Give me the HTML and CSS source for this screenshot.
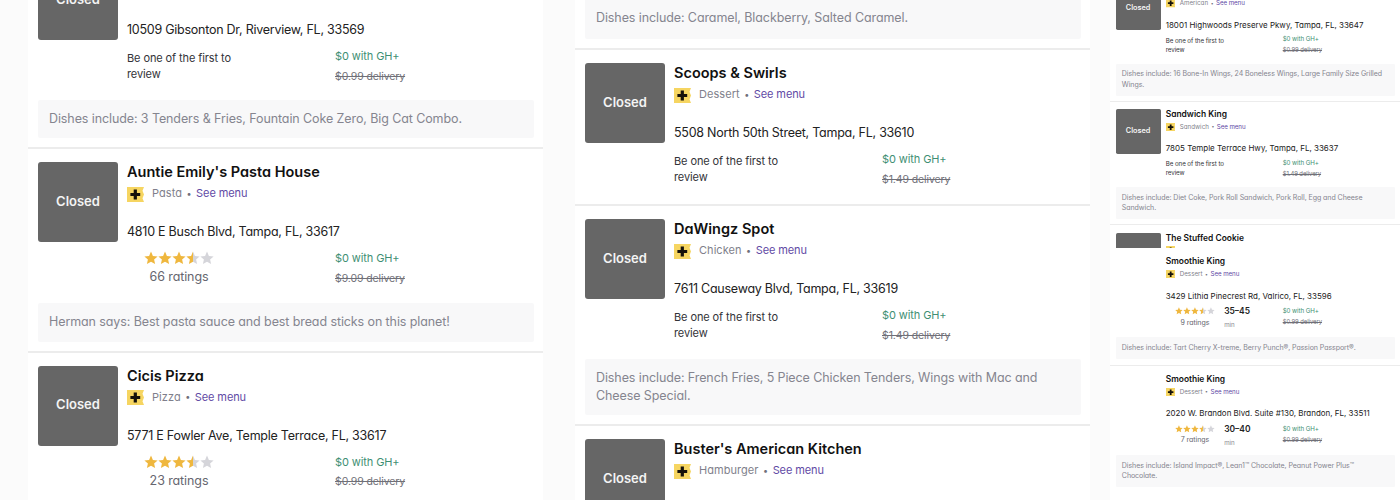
FILE: index.html
```html
<!DOCTYPE html>
<html lang="en">
<head>
<meta charset="utf-8">
<title>Restaurants</title>
<link rel="stylesheet" href="styles.css">
</head>
<body>
<svg class="defs" width="0" height="0" aria-hidden="true">
  <symbol id="plus" viewBox="0 0 17 15">
    <path fill="#f6d561" d="M0 0h17l-1.500 3.700L17 7.500l-1.500 3.800L17 15H0z"/>
    <path fill="#15110a" d="M6.700 2.500h3.200v3.400h3.300v3.200H9.900v3.400H6.700V9.100H3.400V5.900h3.300z"/>
  </symbol>
  <symbol id="star" viewBox="0 0 14 14">
    <path d="M7 .6l1.900 4.300 4.700.5-3.500 3.100 1 4.600L7 10.700l-4.100 2.400 1-4.600L.4 5.400l4.700-.5z"/>
  </symbol>
  <symbol id="half" viewBox="0 0 14 14">
    <path fill="#d5d5da" d="M7 .6l1.900 4.300 4.700.5-3.500 3.100 1 4.600L7 10.700z"/>
    <path fill="#efb73e" d="M7 .6L5.100 4.900l-4.700.5 3.500 3.100-1 4.600L7 10.700z"/>
  </symbol>
</svg>
<main class="board">
  <section class="col col-a">
    <article class="card cut-1">
      <div class="top">
        <div class="thumb">Closed</div>
        <div class="info">
          <h3 class="name">Big Cat Chicken</h3>
          <div class="meta"><svg class="badge"><use href="#plus"/></svg><span class="cuisine">Chicken</span><span class="dot">•</span><a class="menu">See menu</a></div>
          <div class="addr">10509 Gibsonton Dr, Riverview, FL, 33569</div>
        </div>
      </div>
      <div class="stats">
        <div class="review">Be one of the first to review</div>
        <div class="price"><span class="gh">$0 with GH+</span><s class="fee">$0.99 delivery</s></div>
      </div>
      <p class="note">Dishes include: 3 Tenders &amp; Fries, Fountain Coke Zero, Big Cat Combo.</p>
    </article>
    <article class="card">
      <div class="top">
        <div class="thumb">Closed</div>
        <div class="info">
          <h3 class="name">Auntie Emily's Pasta House</h3>
          <div class="meta"><svg class="badge"><use href="#plus"/></svg><span class="cuisine">Pasta</span><span class="dot">•</span><a class="menu">See menu</a></div>
          <div class="addr">4810 E Busch Blvd, Tampa, FL, 33617</div>
        </div>
      </div>
      <div class="stats">
        <div class="rating"><div class="stars"><svg><use href="#star"/></svg><svg><use href="#star"/></svg><svg><use href="#star"/></svg><svg><use href="#half"/></svg><svg class="off"><use href="#star"/></svg></div><span class="count">66 ratings</span></div>
        <div class="price"><span class="gh">$0 with GH+</span><s class="fee">$9.09 delivery</s></div>
      </div>
      <p class="note">Herman says: Best pasta sauce and best bread sticks on this planet!</p>
    </article>
    <article class="card">
      <div class="top">
        <div class="thumb">Closed</div>
        <div class="info">
          <h3 class="name">Cicis Pizza</h3>
          <div class="meta"><svg class="badge"><use href="#plus"/></svg><span class="cuisine">Pizza</span><span class="dot">•</span><a class="menu">See menu</a></div>
          <div class="addr">5771 E Fowler Ave, Temple Terrace, FL, 33617</div>
        </div>
      </div>
      <div class="stats">
        <div class="rating"><div class="stars"><svg><use href="#star"/></svg><svg><use href="#star"/></svg><svg><use href="#star"/></svg><svg><use href="#half"/></svg><svg class="off"><use href="#star"/></svg></div><span class="count">23 ratings</span></div>
        <div class="price"><span class="gh">$0 with GH+</span><s class="fee">$0.99 delivery</s></div>
      </div>
    </article>
  </section>

  <section class="col col-b">
    <article class="card cut-2">
      <p class="note">Dishes include: Caramel, Blackberry, Salted Caramel.</p>
    </article>
    <article class="card">
      <div class="top">
        <div class="thumb">Closed</div>
        <div class="info">
          <h3 class="name">Scoops &amp; Swirls</h3>
          <div class="meta"><svg class="badge"><use href="#plus"/></svg><span class="cuisine">Dessert</span><span class="dot">•</span><a class="menu">See menu</a></div>
          <div class="addr">5508 North 50th Street, Tampa, FL, 33610</div>
        </div>
      </div>
      <div class="stats">
        <div class="review">Be one of the first to review</div>
        <div class="price"><span class="gh">$0 with GH+</span><s class="fee">$1.49 delivery</s></div>
      </div>
    </article>
    <article class="card">
      <div class="top">
        <div class="thumb">Closed</div>
        <div class="info">
          <h3 class="name">DaWingz Spot</h3>
          <div class="meta"><svg class="badge"><use href="#plus"/></svg><span class="cuisine">Chicken</span><span class="dot">•</span><a class="menu">See menu</a></div>
          <div class="addr">7611 Causeway Blvd, Tampa, FL, 33619</div>
        </div>
      </div>
      <div class="stats">
        <div class="review">Be one of the first to review</div>
        <div class="price"><span class="gh">$0 with GH+</span><s class="fee">$1.49 delivery</s></div>
      </div>
      <p class="note">Dishes include: French Fries, 5 Piece Chicken Tenders, Wings with Mac and Cheese Special.</p>
    </article>
    <article class="card">
      <div class="top">
        <div class="thumb">Closed</div>
        <div class="info">
          <h3 class="name">Buster's American Kitchen</h3>
          <div class="meta"><svg class="badge"><use href="#plus"/></svg><span class="cuisine">Hamburger</span><span class="dot">•</span><a class="menu">See menu</a></div>
        </div>
      </div>
    </article>
  </section>

  <section class="col col-small">
    <article class="card cut-3">
      <div class="top">
        <div class="thumb">Closed</div>
        <div class="info">
          <h3 class="name">Wing Stop</h3>
          <div class="meta"><svg class="badge"><use href="#plus"/></svg><span class="cuisine">American</span><span class="dot">•</span><a class="menu">See menu</a></div>
          <div class="addr">18001 Highwoods Preserve Pkwy, Tampa, FL, 33647</div>
        </div>
      </div>
      <div class="stats">
        <div class="review">Be one of the first to review</div>
        <div class="price"><span class="gh">$0 with GH+</span><s class="fee">$0.99 delivery</s></div>
      </div>
      <p class="note">Dishes include: 16 Bone-In Wings, 24 Boneless Wings, Large Family Size Grilled Wings.</p>
    </article>
    <article class="card">
      <div class="top">
        <div class="thumb">Closed</div>
        <div class="info">
          <h3 class="name">Sandwich King</h3>
          <div class="meta"><svg class="badge"><use href="#plus"/></svg><span class="cuisine">Sandwich</span><span class="dot">•</span><a class="menu">See menu</a></div>
          <div class="addr">7805 Temple Terrace Hwy, Tampa, FL, 33637</div>
        </div>
      </div>
      <div class="stats">
        <div class="review">Be one of the first to review</div>
        <div class="price"><span class="gh">$0 with GH+</span><s class="fee">$1.49 delivery</s></div>
      </div>
      <p class="note">Dishes include: Diet Coke, Pork Roll Sandwich, Pork Roll, Egg and Cheese Sandwich.</p>
    </article>
    <article class="card sliced">
      <div class="top">
        <div class="thumb"></div>
        <div class="info">
          <h3 class="name">The Stuffed Cookie</h3>
          <div class="meta"><svg class="badge"><use href="#plus"/></svg></div>
        </div>
      </div>
    </article>
    <article class="card noimg">
      <div class="top">
        <div class="blank"></div>
        <div class="info">
          <h3 class="name">Smoothie King</h3>
          <div class="meta"><svg class="badge"><use href="#plus"/></svg><span class="cuisine">Dessert</span><span class="dot">•</span><a class="menu">See menu</a></div>
          <div class="addr">3429 Lithia Pinecrest Rd, Valrico, FL, 33596</div>
        </div>
      </div>
      <div class="stats">
        <div class="rating"><div class="stars"><svg><use href="#star"/></svg><svg><use href="#star"/></svg><svg><use href="#star"/></svg><svg><use href="#half"/></svg><svg class="off"><use href="#star"/></svg></div><span class="count">9 ratings</span></div>
        <div class="eta"><strong>35–45</strong><span>min</span></div>
        <div class="price"><span class="gh">$0 with GH+</span><s class="fee">$0.99 delivery</s></div>
      </div>
      <p class="note">Dishes include: Tart Cherry X-treme, Berry Punch®, Passion Passport®.</p>
    </article>
    <article class="card noimg">
      <div class="top">
        <div class="blank"></div>
        <div class="info">
          <h3 class="name">Smoothie King</h3>
          <div class="meta"><svg class="badge"><use href="#plus"/></svg><span class="cuisine">Dessert</span><span class="dot">•</span><a class="menu">See menu</a></div>
          <div class="addr">2020 W. Brandon Blvd. Suite #130, Brandon, FL, 33511</div>
        </div>
      </div>
      <div class="stats">
        <div class="rating"><div class="stars"><svg><use href="#star"/></svg><svg><use href="#star"/></svg><svg><use href="#star"/></svg><svg><use href="#half"/></svg><svg class="off"><use href="#star"/></svg></div><span class="count">7 ratings</span></div>
        <div class="eta"><strong>30–40</strong><span>min</span></div>
        <div class="price"><span class="gh">$0 with GH+</span><s class="fee">$0.99 delivery</s></div>
      </div>
      <p class="note">Dishes include: Island Impact®, Lean1™ Chocolate, Peanut Power Plus™ Chocolate.</p>
    </article>
  </section>
</main>
</body>
</html>
```
FILE: styles.css
```css
* { box-sizing: border-box; }
html, body { margin: 0; height: 500px; overflow: hidden; background: #fbfbfb; }
body { font-family: Inter, "Liberation Sans", sans-serif; font-feature-settings: "cv11" 1; color: #1b1b1f; }
.defs { position: absolute; }
.board { display: flex; height: 500px; overflow: hidden; padding-left: 28px; }
.col { flex: none; width: 515px; height: 500px; overflow: hidden; background: #fff; }
.col-a { margin-right: 32px; }
.col-b { margin-right: 20px; }
.col-small { zoom: 0.5625; width: 516px; height: 889px; }
.card { padding: 13px 9px 9px 10px; border-bottom: 2px solid #ececec; background: #fff; }
.card:last-child { border-bottom: 0; }
.cut-1 { margin-top: -53px; }
.cut-2 { margin-top: -1px; padding-top: 0; }
.cut-2 .note { margin-top: 0; padding-bottom: 12px; }
.cut-3 { margin-top: -39px; }
.top { display: flex; gap: 9px; }
.thumb { width: 80px; height: 80px; flex: none; padding-bottom: 3px; border-radius: 3px; background: #666; color: #f4f4f4; display: flex; align-items: center; justify-content: center; font-size: 13px; font-weight: 600; }
.blank { width: 80px; flex: none; }
.info { min-width: 0; }
.name { margin: 0; font-size: 14.5px; line-height: 20px; font-weight: 600; color: #111; }
.meta { display: flex; align-items: center; height: 18px; margin-top: 2px; font-size: 11px; letter-spacing: 0.05px; }
.badge { width: 17px; height: 15px; flex: none; margin: 2px 8px 0 0; }
.cuisine { color: #7f7f8b; }
.dot { color: #6f6f7b; margin: 0 4.5px; font-size: 9px; }
.menu { color: #5f4aa5; letter-spacing: -0.1px; }
.addr { margin-top: 21px; font-size: 12.5px; line-height: 18px; letter-spacing: -0.25px; color: #222; white-space: nowrap; }
.stats { display: flex; padding-left: 89px; margin-top: 7px; min-height: 45px; }
.review { width: 115px; margin-right: 93px; margin-top: 2.5px; font-size: 11px; line-height: 16px; letter-spacing: -0.1px; color: #333338; }
.rating { width: 104px; margin-right: 104px; min-height: 46.5px; text-align: center; }
.stars { display: flex; justify-content: center; height: 15px; margin-top: 2px; }
.stars svg { width: 14px; height: 14px; fill: #efb73e; }
.stars svg.off { fill: #d5d5da; }
.count { display: block; margin-top: 3px; font-size: 12.5px; line-height: 16px; letter-spacing: -0.1px; color: #66666f; }
.eta { width: 104px; display: flex; flex-direction: column; }
.eta strong { font-size: 15px; line-height: 19px; font-weight: 600; color: #222; }
.eta span { font-size: 11px; line-height: 20px; margin-top: 3.5px; color: #8a8a93; }
.price { display: flex; flex-direction: column; font-size: 11px; line-height: 19.5px; letter-spacing: -0.1px; }
.gh { color: #3f8f74; }
.fee { color: #707078; font-size: 10.5px; }
.note { margin: 7.5px 0 0; padding: 10px 11px 10.5px; background: #f8f8f9; font-size: 12.5px; line-height: 18px; letter-spacing: -0.1px; color: #85858f; border-radius: 2px; }
.sliced { height: 41px; overflow: hidden; border: 0; padding-bottom: 0; }
.col-small .name { font-size: 15px; }
.col-small .addr { font-size: 14.2px; letter-spacing: 0; }
.noimg { padding-top: 14px; padding-bottom: 11px; }
.noimg .stats { margin-top: 10px; min-height: 47.5px; }
.noimg .rating { margin-right: 0; min-height: 0; }
```
